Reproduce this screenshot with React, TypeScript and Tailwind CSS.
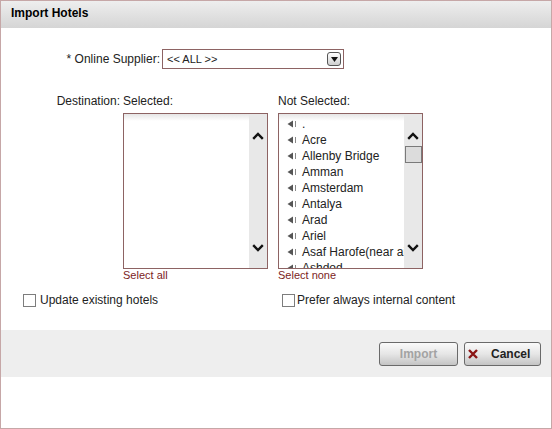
import React from 'react';

const destinations = [
    '.',
    'Acre',
    'Allenby Bridge',
    'Amman',
    'Amsterdam',
    'Antalya',
    'Arad',
    'Ariel',
    'Asaf Harofe(near airport)',
    'Ashdod',
];

const ChevronUp = () => (
    <svg width="12" height="8" viewBox="0 0 12 8">
        <path d="M1.2 6.8 L6 2 L10.8 6.8" fill="none" stroke="#111" strokeWidth="2.4" />
    </svg>
);

const ChevronDown = () => (
    <svg width="12" height="8" viewBox="0 0 12 8">
        <path d="M1.2 1.2 L6 6 L10.8 1.2" fill="none" stroke="#111" strokeWidth="2.4" />
    </svg>
);

const ItemIcon = () => (
    <svg width="10" height="8" viewBox="0 0 10 8" className="shrink-0">
        <path d="M0.5 4 L6 0.5 L6 7.5 Z" fill="#555" />
        <rect x="8" y="1" width="1" height="6" fill="#888" />
    </svg>
);

const Scrollbar: React.FC<{ thumb?: boolean }> = ({ thumb }) => (
    <div className="w-[18px] h-full bg-[#e8e8e8] flex flex-col items-center">
        <div className="mt-[18px] leading-none">
            <ChevronUp />
        </div>
        {thumb && (
            <div className="mt-[6px] w-[17px] h-[17px] bg-[#dcdcdc] border border-[#7a7a7a]" />
        )}
        <div className="mt-auto mb-[16px] leading-none">
            <ChevronDown />
        </div>
    </div>
);

const Checkbox = () => (
    <span className="inline-block w-[13px] h-[13px] border border-[#7d7d7d] bg-white shrink-0" />
);

const ImportHotels: React.FC = () => {
    return (
        <div className="w-[552px] h-[429px] border border-[#c6a7a7] bg-white text-[12px] text-[#222] font-['Liberation_Sans',Arial,sans-serif] overflow-hidden flex flex-col">
            {/* header */}
            <div className="h-[27px] shrink-0 bg-gradient-to-b from-[#eeeeee] to-[#d5d5d5] flex items-center pl-[10px] pb-[3px]">
                <span className="font-bold text-black">Import Hotels</span>
            </div>

            {/* supplier */}
            <div className="mt-[21px] flex items-center">
                <label className="w-[161px] text-right pr-[2px]">* Online Supplier:</label>
                <div className="w-[182px] h-[20px] border border-[#8d6363] flex items-center pl-[4px] pr-[2px] text-[11px]">
                    <span className="flex-1">&lt;&lt; ALL &gt;&gt;</span>
                    <span className="w-[14px] h-[14px] rounded-[3px] border border-[#555] bg-gradient-to-b from-white to-[#cfcfcf] flex items-center justify-center">
                        <svg width="7" height="5" viewBox="0 0 7 5">
                            <path d="M0 0 L7 0 L3.5 5 Z" fill="#111" />
                        </svg>
                    </span>
                </div>
            </div>

            {/* lists */}
            <div className="mt-[25px] flex">
                <div className="w-[122px] text-right leading-[14px] pr-[3px]">Destination:</div>
                <div className="w-[145px] flex flex-col">
                    <div className="leading-[14px]">Selected:</div>
                    <div className="mt-[5px] h-[156px] border border-[#8d6363] flex">
                        <div className="flex-1 bg-gradient-to-b from-[#e6e6e6] via-white to-white bg-[length:100%_14px] bg-no-repeat" />
                        <Scrollbar />
                    </div>
                    <a className="leading-[13px] text-[11px] text-[#7c1d1d]">Select all</a>
                </div>
                <div className="w-[10px]" />
                <div className="w-[145px] flex flex-col">
                    <div className="leading-[14px]">Not Selected:</div>
                    <div className="mt-[5px] h-[156px] border border-[#8d6363] flex">
                        <div className="flex-1 overflow-hidden pt-[2px] bg-gradient-to-b from-[#e6e6e6] via-white to-white bg-[length:100%_14px] bg-no-repeat">
                            {destinations.map(d => (
                                <div key={d} className="h-[16px] flex items-center pl-[8px] whitespace-nowrap overflow-hidden">
                                    <ItemIcon />
                                    <span className="ml-[5px]">{d}</span>
                                </div>
                            ))}
                        </div>
                        <Scrollbar thumb />
                    </div>
                    <a className="leading-[13px] text-[11px] text-[#7c1d1d]">Select none</a>
                </div>
            </div>

            {/* options */}
            <div className="mt-[9px] flex items-center">
                <div className="w-[281px] flex items-center pl-[22px]">
                    <Checkbox />
                    <span className="ml-[4px]">Update existing hotels</span>
                </div>
                <div className="flex items-center">
                    <Checkbox />
                    <span className="ml-[2px]">Prefer always internal content</span>
                </div>
            </div>

            {/* footer */}
            <div className="mt-[21px] h-[47px] bg-[#eeeeee] flex items-center justify-end pr-[10px] gap-[6px]">
                <button className="w-[79px] h-[24px] rounded-[3px] border border-[#6a6a6a] bg-gradient-to-b from-[#fafafa] via-[#e6e6e6] to-[#c4c4c4] font-bold text-[#a3a3a3] text-[12px]">
                    Import
                </button>
                <button className="w-[77px] h-[24px] rounded-[3px] border border-[#6a6a6a] bg-gradient-to-b from-[#fafafa] via-[#e6e6e6] to-[#c4c4c4] font-bold text-[#222] text-[12px] flex items-center pl-[3px]">
                    <svg width="10" height="10" viewBox="0 0 10 10">
                        <path d="M1 1 L9 9 M9 1 L1 9" stroke="#8b1515" strokeWidth="2.4" />
                    </svg>
                    <span className="ml-[13px]">Cancel</span>
                </button>
            </div>
        </div>
    );
};

export default ImportHotels;
